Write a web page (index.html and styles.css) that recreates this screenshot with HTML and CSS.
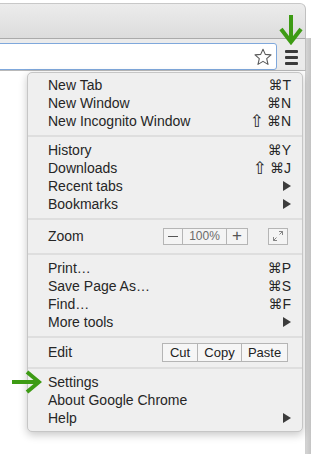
FILE: index.html
```html
<!DOCTYPE html>
<html>
<head>
<meta charset="utf-8">
<link rel="stylesheet" href="styles.css">
</head>
<body>
<div class="screen">
  <div class="window">
    <div class="tabstrip"></div>
    <div class="toolbar">
      <div class="omnibox">
        <svg class="star" width="18" height="18" viewBox="0 0 18 18"><polygon points="9,1.2 11.3,6.4 17,6.9 12.7,10.7 14,16.4 9,13.4 4,16.4 5.3,10.7 1,6.9 6.7,6.4" fill="none" stroke="#5a5a5a" stroke-width="1.1" stroke-linejoin="round"/></svg>
      </div>
      <div class="hamburger"><span></span><span></span><span></span></div>
    </div>
    <div class="page"></div>
  </div>
  <div class="edge"></div>
</div>

<div class="menu">
  <div class="item"><span>New Tab</span><span class="key">⌘T</span></div>
  <div class="item"><span>New Window</span><span class="key">⌘N</span></div>
  <div class="item"><span>New Incognito Window</span><span class="key"><span class="shift">⇧</span>⌘N</span></div>
  <div class="sep"></div>
  <div class="item"><span>History</span><span class="key">⌘Y</span></div>
  <div class="item"><span>Downloads</span><span class="key"><span class="shift">⇧</span>⌘J</span></div>
  <div class="item"><span>Recent tabs</span><span class="tri"></span></div>
  <div class="item"><span>Bookmarks</span><span class="tri"></span></div>
  <div class="sep"></div>
  <div class="item zoomrow">
    <span>Zoom</span>
    <div class="zoomctl">
      <span class="zc minus"><span class="bar"></span></span>
      <span class="zc pct">100%</span>
      <span class="zc plus">+</span>
    </div>
    <span class="full">
      <svg width="12" height="12" viewBox="0 0 12 12"><path d="M7 1.5h3.5v3.5M10.5 1.5L7.5 4.5M5 10.5H1.5V7M1.5 10.5l3-3" fill="none" stroke="#777" stroke-width="0.9"/></svg>
    </span>
  </div>
  <div class="sep"></div>
  <div class="item"><span>Print…</span><span class="key">⌘P</span></div>
  <div class="item"><span>Save Page As…</span><span class="key">⌘S</span></div>
  <div class="item"><span>Find…</span><span class="key">⌘F</span></div>
  <div class="item"><span>More tools</span><span class="tri"></span></div>
  <div class="sep"></div>
  <div class="item editrow">
    <span>Edit</span>
    <div class="editctl">
      <span class="ec cut">Cut</span>
      <span class="ec copy">Copy</span>
      <span class="ec paste">Paste</span>
    </div>
  </div>
  <div class="sep"></div>
  <div class="item"><span>Settings</span></div>
  <div class="item"><span>About Google Chrome</span></div>
  <div class="item"><span>Help</span><span class="tri"></span></div>
</div>

<svg class="arrow-down" width="26" height="32" viewBox="0 0 26 32">
  <path d="M12 2V29M2 16L12 29L22 16" fill="none" stroke="#3d9b14" stroke-width="4"/>
</svg>
<svg class="arrow-right" width="32" height="26" viewBox="0 0 32 26">
  <path d="M2 13H29M17 3L29 13L17 23" fill="none" stroke="#3d9b14" stroke-width="4"/>
</svg>
</body>
</html>
```
FILE: styles.css
```css
html, body {
  margin: 0;
  padding: 0;
  background: #fff;
}
body {
  width: 311px;
  height: 454px;
  overflow: hidden;
  position: relative;
  font-family: "Liberation Sans", "DejaVu Sans", sans-serif;
}
.screen {
  display: flex;
  height: 454px;
}
.window {
  width: 306px;
  display: flex;
  flex-direction: column;
}
.tabstrip {
  margin-top: 3px;
  height: 34px;
  box-sizing: content-box;
  border-top: 1px solid #c8c8c8;
  border-right: 1px solid #c0c0c0;
  border-top-right-radius: 6px;
  background: linear-gradient(#ececec, #dcdcdc);
}
.toolbar {
  height: 33px;
  box-sizing: border-box;
  border-top: 1px solid #aaaaaa;
  border-bottom: 1px solid #b9b9b9;
  border-right: 1px solid #c0c0c0;
  background: #ebebeb;
  display: flex;
  align-items: flex-start;
  padding-top: 4px;
}
.omnibox {
  margin-left: -3px;
  width: 280px;
  height: 27px;
  box-sizing: border-box;
  border: 1px solid #7fa8dc;
  border-radius: 3px;
  background: #fff;
  display: flex;
  align-items: center;
  justify-content: flex-end;
  padding-right: 4px;
}
.star {
  display: block;
}
.hamburger {
  margin-left: 8px;
  margin-top: 7px;
  width: 13px;
  display: flex;
  flex-direction: column;
  gap: 3px;
}
.hamburger span {
  display: block;
  height: 3px;
  background: #3a3a3a;
  border-radius: 1px;
}
.page {
  flex: 1;
  background: #fff;
  border-right: 1px solid #d0d0d0;
}
.edge {
  flex: 1;
  margin-top: 38px;
  background: linear-gradient(90deg, #d4d4d4, #c4c4c4);
}

.menu {
  position: absolute;
  left: 27px;
  top: 72px;
  width: 276px;
  box-sizing: border-box;
  background: #efefef;
  border: 1px solid #c6c6c6;
  border-radius: 5px;
  box-shadow: 0 3px 9px rgba(0, 0, 0, 0.22);
  padding: 3px 0 4px;
  font-size: 14px;
  color: #262626;
}
.item {
  display: flex;
  align-items: center;
  justify-content: space-between;
  height: 18px;
  padding: 0 11px 0 20px;
  white-space: nowrap;
}
.key {
  display: flex;
  align-items: center;
  color: #262626;
  font-size: 14px;
  line-height: 18px;
}
.shift {
  font-family: "DejaVu Sans", sans-serif;
  font-size: 17px;
  line-height: 18px;
  margin-right: 3px;
}
.tri {
  width: 0;
  height: 0;
  border-top: 5px solid transparent;
  border-bottom: 5px solid transparent;
  border-left: 8px solid #3c3c3c;
}
.sep {
  height: 2px;
  background: #dedede;
  margin: 5px 0 4px;
}
.zoomrow {
  height: 24px;
  justify-content: flex-start;
}
.zoomctl {
  margin-left: auto;
  display: flex;
  height: 17px;
  border: 1px solid #b5b5b5;
  box-sizing: border-box;
  background: #f4f4f4;
}
.zc {
  display: flex;
  align-items: center;
  justify-content: center;
  box-sizing: border-box;
  color: #666;
}
.minus {
  width: 19px;
  border-right: 1px solid #b5b5b5;
}
.minus .bar {
  width: 10px;
  height: 1px;
  background: #555;
}
.pct {
  width: 44px;
  font-size: 12px;
  color: #6a6a6a;
  border-right: 1px solid #b5b5b5;
}
.plus {
  width: 20px;
  font-size: 17px;
  font-weight: 300;
  color: #555;
}
.full {
  margin-left: 20px;
  margin-right: 3px;
  width: 20px;
  height: 17px;
  box-sizing: border-box;
  border: 1px solid #b5b5b5;
  background: #f4f4f4;
  display: flex;
  align-items: center;
  justify-content: center;
}
.full svg {
  display: block;
}
.editrow {
  height: 20px;
  justify-content: space-between;
}
.editctl {
  display: flex;
  height: 19px;
  margin-right: 3px;
  border: 1px solid #b5b5b5;
  box-sizing: border-box;
  background: #f6f6f6;
}
.ec {
  display: flex;
  align-items: center;
  justify-content: center;
  font-size: 13px;
  color: #222;
  box-sizing: border-box;
}
.cut {
  width: 35px;
  border-right: 1px solid #b5b5b5;
}
.copy {
  width: 44px;
  border-right: 1px solid #b5b5b5;
}
.paste {
  width: 45px;
}

.arrow-down {
  position: absolute;
  left: 279px;
  top: 13px;
}
.arrow-right {
  position: absolute;
  left: 10px;
  top: 369px;
}
```
